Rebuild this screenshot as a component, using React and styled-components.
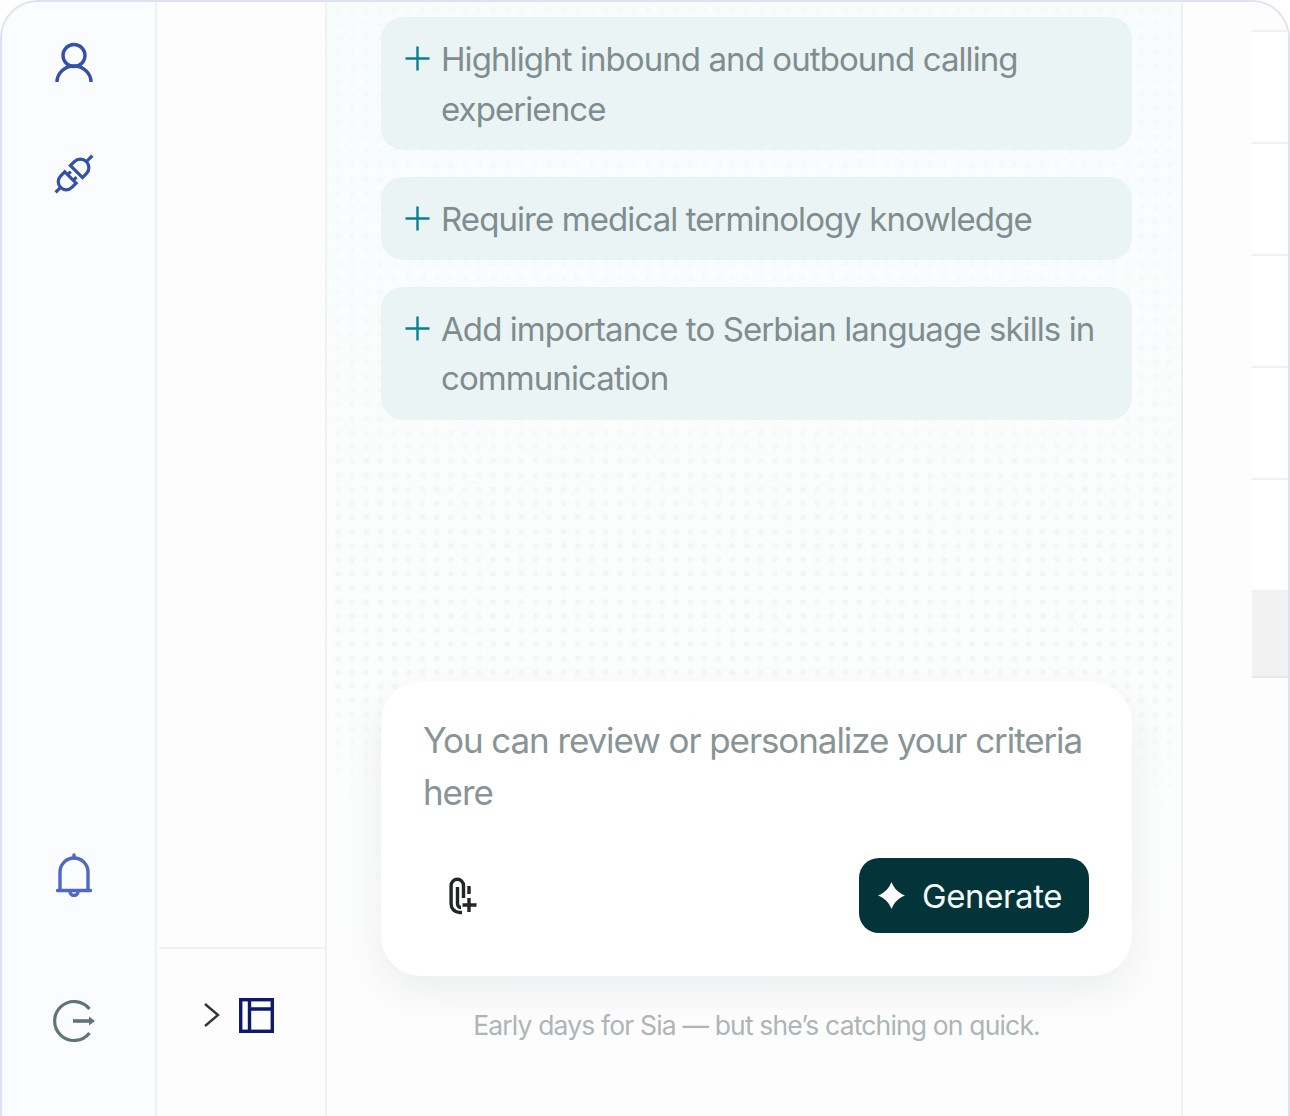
import React from "react";
import styled, { createGlobalStyle } from "styled-components";

const Global = createGlobalStyle`
  html, body { margin: 0; padding: 0; background: #ffffff; }
  body { font-family: Inter, "Noto Sans", "Liberation Sans", sans-serif; overflow: hidden; }
`;

const Frame = styled.div`
  box-sizing: border-box;
  width: 1290px;
  height: 1116px;
  display: flex;
  border: solid #dde1f2;
  border-width: 2px 2px 0 2px;
  border-radius: 38px 38px 0 0;
  overflow: hidden;
  background: #fdfdfd;
`;

const Rail = styled.nav`
  box-sizing: border-box;
  flex: 0 0 155px;
  height: 100%;
  background: #fbfcff;
  border-right: 2px solid #eff0f3;
  display: flex;
  flex-direction: column;
  align-items: center;
  justify-content: space-between;
  padding: 39px 10px 73px 0;
`;

const RailGroup = styled.div`
  display: flex;
  flex-direction: column;
  align-items: center;
  gap: ${(p) => p.$gap}px;
`;

const Side = styled.aside`
  box-sizing: border-box;
  flex: 0 0 170px;
  height: 100%;
  display: flex;
  flex-direction: column;
  justify-content: flex-end;
  background: #fdfdfd;
  border-right: 2px solid #f1f1f3;
`;

const SideFooter = styled.div`
  box-sizing: border-box;
  height: 169px;
  margin-left: 2px;
  border-top: 2px solid #f1f1f3;
  display: flex;
  align-items: flex-start;
  padding: 49px 0 0 45px;
  gap: 19px;
`;

const Main = styled.main`
  box-sizing: border-box;
  position: relative;
  flex: 0 0 855px;
  height: 100%;
  display: flex;
  flex-direction: column;
  padding: 15px 49px 74px 54px;
  border-right: 2px solid #eff0f3;
  background: linear-gradient(180deg, #f8fcfc 0, #fbfdfd 420px, #fcfdfd 800px, #fdfdfd 1060px);

  &::before {
    content: "";
    position: absolute;
    inset: 0 0 300px 0;
    background-image: radial-gradient(circle, #f3f5f7 2px, transparent 3.6px);
    background-size: 14.1px 14.1px;
    background-position: 4px 1px;
    -webkit-mask-image: linear-gradient(180deg, rgba(0, 0, 0, 0.35) 0, rgba(0, 0, 0, 0.6) 400px, #000 520px, #000 680px, transparent 810px);
    mask-image: linear-gradient(180deg, rgba(0, 0, 0, 0.35) 0, rgba(0, 0, 0, 0.6) 400px, #000 520px, #000 680px, transparent 810px);
  }
`;

const Cards = styled.div`
  position: relative;
  display: flex;
  flex-direction: column;
  gap: 26.5px;
`;

const Card = styled.button`
  box-sizing: border-box;
  display: flex;
  align-items: flex-start;
  gap: 11px;
  width: 751px;
  padding: 18px 24px 16px;
  border: 0;
  border-radius: 22px;
  background: #ebf4f5;
  font: inherit;
  text-align: left;
  cursor: pointer;
`;

const PlusIcon = styled.svg`
  flex: 0 0 25px;
  width: 25px;
  height: 25px;
  margin-top: 11px;
`;

const CardText = styled.span`
  font-size: 33px;
  line-height: 49.5px;
  letter-spacing: -0.92px;
  color: #7f8d8f;
`;

const Composer = styled.section`
  position: relative;
  box-sizing: border-box;
  width: 751px;
  height: 294px;
  margin-top: auto;
  padding: 32px 43px 43px 42px;
  border-radius: 40px;
  background: #ffffff;
  box-shadow: 0 16px 40px rgba(20, 40, 50, 0.07);
  display: flex;
  flex-direction: column;
  justify-content: space-between;
`;

const Prompt = styled.p`
  margin: 0;
  font-size: 35px;
  line-height: 52px;
  letter-spacing: -1.09px;
  color: #899496;
`;

const ComposerBar = styled.div`
  display: flex;
  align-items: center;
  justify-content: space-between;
`;

const AttachButton = styled.button`
  display: flex;
  padding: 0;
  margin-left: 25px;
  border: 0;
  background: none;
  cursor: pointer;
`;

const GenerateButton = styled.button`
  box-sizing: border-box;
  width: 230px;
  height: 75px;
  display: flex;
  align-items: center;
  gap: 17px;
  padding: 0 0 0 19px;
  border: 0;
  border-radius: 20px;
  background: #03343a;
  color: #f4f8f8;
  font: inherit;
  font-size: 33px;
  letter-spacing: -0.4px;
  cursor: pointer;
`;

const Note = styled.p`
  position: relative;
  margin: 32px 0 0;
  width: 751px;
  text-align: center;
  font-size: 26.5px;
  line-height: 34px;
  letter-spacing: -0.84px;
  color: #adb5b8;
`;

const Right = styled.aside`
  flex: 1;
  height: 100%;
  display: flex;
  flex-direction: column;
  align-items: flex-end;
  padding-top: 28px;
  background: #fdfdfd;
`;

const RowList = styled.div`
  width: 36px;
  display: flex;
  flex-direction: column;
  background: #ffffff;
  border-top: 2px solid #f1f1f2;
`;

const Row = styled.div`
  box-sizing: border-box;
  height: ${(p) => p.$h}px;
  background: ${(p) => (p.$active ? "#f2f2f2" : "#ffffff")};
  border-bottom: 2px solid ${(p) => (p.$active ? "#e9e9ea" : "#f1f1f2")};
`;

const Plus = () => (
  <PlusIcon viewBox="0 0 25 25" fill="none" stroke="#0b7f8c" strokeWidth="2.4">
    <path d="M12.5 0.5V24.5M0.5 12.5H24.5" />
  </PlusIcon>
);

const UserIcon = () => (
  <svg width="44" height="44" viewBox="0 0 44 44" fill="none" stroke="#3450ab" strokeWidth="3.4">
    <circle cx="22" cy="14.5" r="11" />
    <path d="M5 41a17 16 0 0 1 34 0" />
  </svg>
);

const PlugIcon = () => (
  <svg width="44" height="44" viewBox="0 0 44 44" fill="none" stroke="#3450ab" strokeWidth="3.2">
    <g transform="rotate(-45 22 22)">
      <path d="M17 14v16h-6a8 8 0 0 1 0-16z" />
      <path d="M-4 22h7M17 18h4.5M17 26h4.5" />
      <path d="M25.5 13.5v17h5.5a8.5 8.5 0 0 0 0-17z" />
      <path d="M39.5 22H48" />
    </g>
  </svg>
);

const BellIcon = () => (
  <svg width="44" height="44" viewBox="0 0 44 44" fill="none" stroke="#5068c4" strokeWidth="3.4">
    <path d="M8 37V19a14 14 0 0 1 28 0V37" />
    <path d="M5.5 37.5H38.5M22 2v3" strokeLinecap="round" />
    <path d="M18 38.5a4 4 0 0 0 8 0" />
  </svg>
);

const ExitIcon = () => (
  <svg width="44" height="44" viewBox="0 0 44 44" fill="none" stroke="#5f7478" strokeWidth="3.2">
    <path d="M37.5 10A19.5 19.5 0 1 0 37.5 34" />
    <path d="M21 22H38" strokeWidth="3.6" />
    <path d="M37 17.5L43 22L37 26.5z" fill="#5f7478" stroke="none" />
  </svg>
);

const ChevronIcon = () => (
  <svg width="16" height="26" viewBox="0 0 16 26" fill="none" stroke="#333638" strokeWidth="2.4" style={{ marginTop: 4 }}>
    <path d="M1 2L14 13L1 24" />
  </svg>
);

const LayoutIcon = () => (
  <svg width="35" height="35" viewBox="0 0 35 35" fill="none" stroke="#0d1a6e" strokeWidth="3.4">
    <rect x="1.7" y="1.7" width="31.6" height="31.6" />
    <path d="M10.5 2V33M10.5 11H33" />
  </svg>
);

const AttachIcon = () => (
  <svg width="30" height="38" viewBox="0 0 30 38" fill="none" stroke="#222628" strokeWidth="3.4">
    <path d="M15.5 21V8.5a6.2 6.2 0 0 0 -12.4 0V27a8.5 8.5 0 0 0 8.5 8.5h2.4" />
    <path d="M9.5 10V27a3.5 3.5 0 0 0 3.5 3.5" />
    <path d="M21 9v8M21 21v14M14.5 28h14" />
  </svg>
);

const StarIcon = () => (
  <svg width="27" height="27" viewBox="0 0 27 27" fill="#ffffff">
    <path d="M13.5 0C16 6.5 20.5 11 27 13.5C20.5 16 16 20.5 13.5 27C11 20.5 6.5 16 0 13.5C6.5 11 11 6.5 13.5 0z" />
  </svg>
);

const suggestions = [
  "Highlight inbound and outbound calling experience",
  "Require medical terminology knowledge",
  "Add importance to Serbian language skills in communication",
];

const rows = [112, 112, 112, 112, 112, 86];

export default function App() {
  return (
    <>
      <Global />
      <Frame>
        <Rail>
          <RailGroup $gap={67}>
            <UserIcon />
            <PlugIcon />
          </RailGroup>
          <RailGroup $gap={102}>
            <BellIcon />
            <ExitIcon />
          </RailGroup>
        </Rail>
        <Side>
          <SideFooter>
            <ChevronIcon />
            <LayoutIcon />
          </SideFooter>
        </Side>
        <Main>
          <Cards>
            {suggestions.map((text) => (
              <Card key={text}>
                <Plus />
                <CardText>{text}</CardText>
              </Card>
            ))}
          </Cards>
          <Composer>
            <Prompt>You can review or personalize your criteria here</Prompt>
            <ComposerBar>
              <AttachButton aria-label="Attach">
                <AttachIcon />
              </AttachButton>
              <GenerateButton>
                <StarIcon />
                Generate
              </GenerateButton>
            </ComposerBar>
          </Composer>
          <Note>Early days for Sia — but she’s catching on quick.</Note>
        </Main>
        <Right>
          <RowList>
            {rows.map((h, i) => (
              <Row key={i} $h={h} $active={i === 5} />
            ))}
          </RowList>
        </Right>
      </Frame>
    </>
  );
}
